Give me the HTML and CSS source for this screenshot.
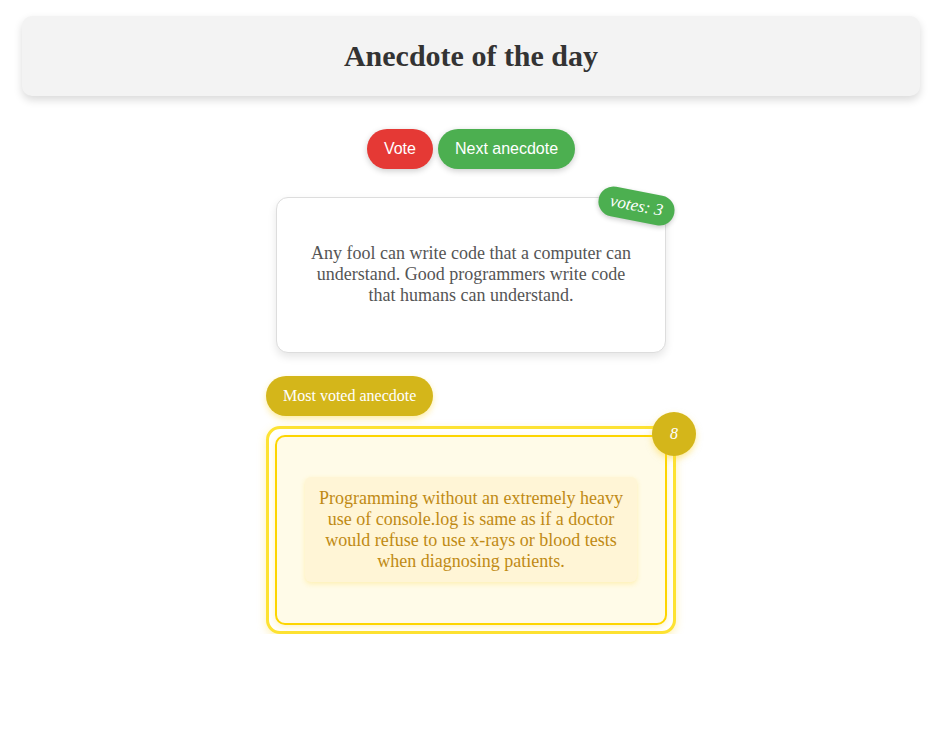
FILE: index.html
```html
<!DOCTYPE html>
<html>
<head>
<meta charset="utf-8">
<link rel="stylesheet" href="styles.css">
</head>
<body>
<header class="header">
  <h1 class="title">Anecdote of the day</h1>
</header>
<div class="actions">
  <button class="btn btn-vote">Vote</button>
  <button class="btn btn-next">Next anecdote</button>
</div>
<div class="card">
  <span class="votes">votes: 3</span>
  <p class="card-text">Any fool can write code that a computer can understand. Good programmers write code that humans can understand.</p>
</div>
<section class="top">
  <div class="top-label">Most voted anecdote</div>
  <div class="top-frame">
    <span class="top-count">8</span>
    <div class="top-inner">
      <p class="top-text">Programming without an extremely heavy use of console.log is same as if a doctor would refuse to use x-rays or blood tests when diagnosing patients.</p>
    </div>
  </div>
</section>
</body>
</html>
```
FILE: styles.css
```css
* { box-sizing: border-box; }
body {
  margin: 0;
  background: #fff;
  font-family: "Liberation Serif", "Times New Roman", serif;
  color: #333;
}
.header {
  margin: 16px 22px 0;
  height: 80px;
  background: #f3f3f3;
  border-radius: 10px;
  box-shadow: 0 4px 8px rgba(0,0,0,0.15);
  display: flex;
  align-items: center;
  justify-content: center;
}
.title {
  margin: 0;
  font-size: 30px;
  font-weight: bold;
  color: #333;
}
.actions {
  margin-top: 33px;
  display: flex;
  justify-content: center;
  gap: 5px;
}
.btn {
  height: 40px;
  padding: 0 17px;
  border: none;
  border-radius: 20px;
  color: #fff;
  font-family: "Liberation Sans", Arial, sans-serif;
  font-size: 16px;
  box-shadow: 0 2px 6px rgba(0,0,0,0.2);
}
.btn-vote { background: #e53935; }
.btn-next { background: #4caf50; }
.card {
  position: relative;
  width: 390px;
  margin: 28px auto 0;
  padding: 45px 30px 46px;
  border: 1px solid #ddd;
  border-radius: 12px;
  background: #fff;
  box-shadow: 0 4px 8px rgba(0,0,0,0.1);
}
.card-text {
  margin: 0;
  font-size: 18px;
  text-align: center;
  color: #555;
}
.votes {
  position: absolute;
  top: -7px;
  right: -10px;
  width: 77px;
  height: 30px;
  line-height: 30px;
  text-align: center;
  background: #4caf50;
  color: #fff;
  font-style: italic;
  font-size: 17px;
  border-radius: 15px;
  transform: rotate(11deg);
  box-shadow: 0 2px 5px rgba(0,0,0,0.2);
}
.top {
  width: 410px;
  margin: 23px auto 0;
}
.top-label {
  display: inline-block;
  height: 40px;
  line-height: 40px;
  padding: 0 17px;
  border-radius: 20px;
  background: #d4b61a;
  color: #fff;
  font-size: 16px;
  box-shadow: 0 3px 6px rgba(253,216,53,0.45);
}
.top-frame {
  position: relative;
  margin-top: 10px;
  padding: 6px;
  border: 3px solid #fde232;
  border-radius: 14px;
  background: #fff;
  box-shadow: 0 3px 8px rgba(253,216,53,0.35);
}
.top-inner {
  padding: 40px 28px 41px;
  border: 2px solid #fdd500;
  border-radius: 10px;
  background: #fffbe8;
  box-shadow: 0 2px 6px rgba(253,216,53,0.3);
}
.top-text {
  margin: 0;
  padding: 11px 11px 10px;
  border-radius: 6px;
  background: #fff5d6;
  box-shadow: 0 2px 5px rgba(253,216,53,0.3);
  font-size: 18px;
  text-align: center;
  color: #c08a14;
}
.top-count {
  position: absolute;
  top: -17px;
  right: -23px;
  width: 44px;
  height: 44px;
  line-height: 44px;
  border-radius: 50%;
  background: #d4b61a;
  color: #fff;
  font-style: italic;
  font-size: 16px;
  text-align: center;
  box-shadow: 0 3px 6px rgba(253,216,53,0.5);
  z-index: 1;
}
```
